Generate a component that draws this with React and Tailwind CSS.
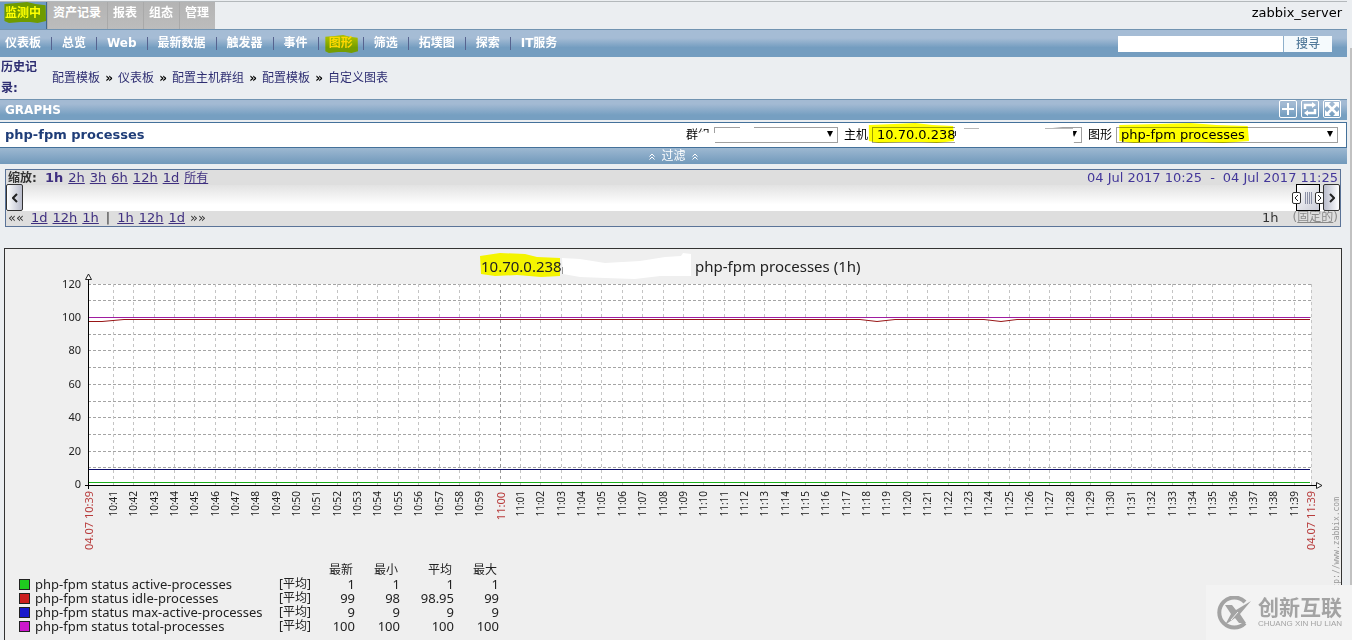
// src/pages/Graphs.jsx
import clsx from 'clsx';

const TABS = ['监测中', '资产记录', '报表', '组态', '管理'];
const MENU = ['仪表板', '总览', 'Web', '最新数据', '触发器', '事件', '图形', '筛选', '拓墣图', '探索', 'IT服务'];
const HISTORY = ['配置模板', '仪表板', '配置主机群组', '配置模板', '自定义图表'];

const ITEMS = [
  { name: 'php-fpm status active-processes', color: '#1fcc1f', values: ['1', '1', '1', '1'] },
  { name: 'php-fpm status idle-processes', color: '#cc1f1f', values: ['99', '98', '98.95', '99'] },
  { name: 'php-fpm status max-active-processes', color: '#1818cc', values: ['9', '9', '9', '9'] },
  { name: 'php-fpm status total-processes', color: '#cc18cc', values: ['100', '100', '100', '100'] },
];

// 10:41 .. 11:39, one label per minute
const TIMES = Array.from({ length: 59 }, (_, i) => {
  const m = 41 + i;
  return `${10 + Math.floor(m / 60)}:${String(m % 60).padStart(2, '0')}`;
});

const PLOT = { left: 83, right: 1306, top: 35, bottom: 236 };
const yAt = v => Math.round(235 - v * 1.67) + 0.5;
const xAt = i => Math.round(107.8 + i * 20.36) + 0.5;

// marker pen stroke laid over its parent
function Marker({ className }) {
  return (
    <svg
      className={clsx('absolute mix-blend-multiply pointer-events-none', className)}
      viewBox="0 0 100 20"
      preserveAspectRatio="none"
      aria-hidden="true"
    >
      <path d="M1 2 L30 1 L55 0 L75 2 L99 3 L100 18 L80 20 L62 19 L40 19 L12 20 L1 18 Z" fill="#ffff00" />
    </svg>
  );
}

function TopTabs() {
  return (
    <header className="flex justify-between h-[27px] text-xs">
      <nav className="flex h-full">
        {TABS.map((tab, i) => (
          <a
            key={tab}
            href="#"
            className={clsx(
              'relative flex pl-[5px] pr-1.5 pt-0.5 font-bold text-white leading-[18px]',
              i === 0
                ? 'bg-[#6f9bc4] border-r border-[#3f6690] pr-[5px]'
                : 'bg-linear-to-b from-[#b4b4b4] to-[#bcbcbc] border-l border-[#a9a9a9]'
            )}
          >
            {tab}
            {i === 0 && <Marker className="left-1 top-0 w-[42px] h-[21px]" />}
          </a>
        ))}
      </nav>
      <span className="pr-[5px] pt-0.5 leading-[18px] text-[13px] text-black">zabbix_server</span>
    </header>
  );
}

function MainMenu() {
  return (
    <div className="flex items-center justify-between h-7 pr-[15px] border-t border-[#7193b1] bg-linear-to-b from-[#a5bcd5] from-30% to-[#749dc0] to-65%">
      <nav className="flex -ml-[5px] text-xs font-bold leading-[13px] text-white">
        {MENU.map((item, i) => (
          <a
            key={item}
            href="#"
            className={clsx(
              'relative px-2.5',
              i > 0 && 'border-l border-[#56638f]',
              item === '图形' && 'text-[#ffd800]'
            )}
          >
            {item}
            {item === '图形' && <Marker className="left-1.5 -top-0.5 w-[33px] h-[18px]" />}
          </a>
        ))}
      </nav>
      <form className="flex h-4" onSubmit={e => e.preventDefault()}>
        <input type="text" aria-label="搜寻" className="w-[165px] bg-white outline-none px-1 text-xs" />
        <button type="submit" className="w-[49px] border-l border-[#8fb0cb] bg-[#f5fafd] text-xs leading-4 font-medium text-[#557c9c]">
          搜寻
        </button>
      </form>
    </div>
  );
}

function History() {
  return (
    <div className="flex items-center h-[42px] pl-px text-xs text-[#2e2e72]">
      <span className="w-[51px] pr-3 font-bold leading-[21px]">历史记录:</span>
      {HISTORY.map((item, i) => (
        <span key={i} className="flex">
          {i > 0 && <span className="w-[18px] text-center font-bold text-black">»</span>}
          <a href="#">{item}</a>
        </span>
      ))}
    </div>
  );
}

function HeaderIcon({ label, children }) {
  return (
    <button type="button" aria-label={label} className="size-[18px] border border-white rounded-xs">
      <svg viewBox="0 0 16 16" className="size-4" fill="none" stroke="#fff" strokeWidth="2">
        {children}
      </svg>
    </button>
  );
}

function GraphsHeader() {
  return (
    <div className="flex justify-between h-[21px] pl-[5px] pr-1.5 border-t border-[#7193b1] bg-linear-to-b from-[#a3bad3] from-20% to-[#769fc1] to-75%">
      <h1 className="text-xs leading-5 font-bold text-white">GRAPHS</h1>
      <div className="flex gap-1">
        <HeaderIcon label="添加">
          <path d="M8 2v12M2 8h12" />
        </HeaderIcon>
        <HeaderIcon label="重置">
          <path d="M3 8V4h8M13 8v4H5" strokeWidth="2.500" />
          <path d="M10 1l4 3-4 3zM6 9l-4 3 4 3z" fill="#fff" stroke="none" />
        </HeaderIcon>
        <HeaderIcon label="全屏">
          <path d="M3 3l10 10M13 3L3 13" strokeWidth="2.500" />
          <path d="M1 1h6L1 7zM15 1v6L9 1zM1 15V9l6 6zM15 15H9l6-6z" fill="#fff" stroke="none" />
        </HeaderIcon>
      </div>
    </div>
  );
}

function Picker({ id, label, value, width, children }) {
  return (
    <div className="flex items-center">
      <label htmlFor={id} className="w-7 text-xs">{label}</label>
      <div className={clsx('relative h-4', width)}>
        <select
          id={id}
          className="block size-full appearance-none border border-[#a0a0a0] bg-white pl-1 pr-4 text-[13px] leading-[14px] text-black outline-none"
        >
          <option>{value}</option>
        </select>
        <svg viewBox="0 0 8 7" className="absolute right-1 top-1 w-2 h-[7px] pointer-events-none" aria-hidden="true">
          <path d="M1 0h6L4 6z" fill="#000" />
        </svg>
        {children}
      </div>
    </div>
  );
}

function PageTitle() {
  return (
    <div className="flex items-center justify-between h-[26px] mt-0.5 pl-[5px] pr-2 border border-l-0 border-[#44719a] bg-white">
      <h2 className="text-[13px] font-bold text-[#1f3d78]">php-fpm processes</h2>
      <div className="flex gap-1.5">
        <Picker id="group" label="群组" value="" width="w-[124px]">
          <svg viewBox="0 0 60 20" className="absolute -left-4 -top-0.5 w-[60px] h-5 pointer-events-none" aria-hidden="true">
            <path d="M0 8L6 6 11 8V20H0zM11 8h6v10h-6zM42 0h14v4H42z" fill="#fff" />
          </svg>
        </Picker>
        <Picker id="host" label="主机" value="10.70.0.238" width="w-[210px]">
          <svg viewBox="0 0 210 24" className="absolute left-0 -top-1 w-[210px] h-6 pointer-events-none" aria-hidden="true">
            <path d="M83 0H92V4L106 4V0H170V3L201 6V8L202 21H83V14L84 13V6H83Z" fill="#fff" />
            <path d="M83.500 8v5" stroke="#333" />
            <path d="M92 5.500h15M173 5.500h28" stroke="#b9b9b9" />
          </svg>
          <Marker className="-left-1 -top-1 w-[86px] h-5" />
        </Picker>
        <Picker id="graph" label="图形" value="php-fpm processes" width="w-[222px]">
          <Marker className="left-0.5 -top-1 w-[131px] h-5" />
        </Picker>
      </div>
    </div>
  );
}

function Chevrons() {
  return (
    <svg viewBox="0 0 6 7" className="w-1.5 h-[7px]" fill="none" stroke="#fff" aria-hidden="true">
      <path d="M0.500 3.500L3 1l2.500 2.500M0.500 6.500L3 4l2.500 2.500" />
    </svg>
  );
}

function FilterBar() {
  return (
    <button
      type="button"
      className="flex items-center justify-center gap-1.5 w-full h-4 bg-linear-to-b from-[#9db8d1] to-[#7199bb] text-xs leading-4 text-white"
    >
      <Chevrons />
      过滤
      <Chevrons />
    </button>
  );
}

function Links({ items }) {
  return items.map(item => (
    <a key={item} href="#" className="underline text-[#3f2f80]">{item}</a>
  ));
}

function ScrollButton({ label, className, d }) {
  return (
    <button
      type="button"
      aria-label={label}
      className={clsx('absolute -top-px w-[17px] h-[27px] rounded-xs border border-[#333] from-white to-[#b9bccb] flex items-center justify-center', className)}
    >
      <svg viewBox="0 0 6 10" className="w-1.5 h-2.5" fill="none" stroke="#222" strokeWidth="2">
        <path d={d} />
      </svg>
    </button>
  );
}

function Grip({ className, d }) {
  return (
    <span className={clsx('absolute top-[7px] w-[9px] h-3 rounded-xs border border-[#333] bg-white flex items-center justify-center', className)}>
      <svg viewBox="0 0 5 8" className="w-[5px] h-2" fill="none" stroke="#222">
        <path d={d} />
      </svg>
    </span>
  );
}

function TimeScroll() {
  return (
    <section className="mt-[5px] ml-[5px] mr-1.5 border border-[#5a7398] bg-[#dedede] text-[13px] text-[#333]">
      <div className="flex justify-between h-[15px] px-0.5 leading-4">
        <div className="flex gap-[5px]">
          <b className="w-8 text-xs leading-4">缩放:</b>
          <b className="text-[#3f2f80]">1h</b>
          <Links items={['2h', '3h', '6h', '12h', '1d']} />
          <a href="#" className="text-xs leading-4 underline text-[#3f2f80]">所有</a>
        </div>
        <div className="flex gap-2 text-[#43379a]">
          <span>04 Jul 2017 10:25</span>
          <span>-</span>
          <span>04 Jul 2017 11:25</span>
        </div>
      </div>
      <div className="relative h-[26px] bg-linear-to-b from-[#e2e2e2] to-white to-75%">
        <ScrollButton label="向前" className="left-0 bg-linear-to-r" d="M5 1L1 5l4 4" />
        <div className="absolute right-5 -top-px w-6 h-[27px] border border-black bg-linear-to-br from-white to-[#c9cbd6] flex items-center justify-center gap-px">
          {[0, 1, 2, 3].map(i => <i key={i} className="w-px h-3 bg-[#8a8fa5]" />)}
          <Grip className="-left-[5px]" d="M4 1L1 4l3 3" />
          <Grip className="-right-[5px]" d="M1 1l3 3-3 3" />
        </div>
        <ScrollButton label="向后" className="right-0 bg-linear-to-l" d="M1 1l4 4-4 4" />
        <input type="range" aria-label="时间" defaultValue="100" className="absolute left-5 right-5 inset-y-0 opacity-0" />
      </div>
      <div className="flex justify-between h-[15px] px-0.5 leading-[13px]">
        <div className="flex gap-[5px]">
          <span className="w-[18px]">««</span>
          <Links items={['1d', '12h', '1h']} />
          <span className="px-0.5">|</span>
          <Links items={['1h', '12h', '1d']} />
          <span>»»</span>
        </div>
        <div className="flex gap-3.5">
          <span>1h</span>
          <a href="#" className="text-xs leading-[13px] text-[#8a8a8a]">(<span className="underline">固定的</span>)</a>
        </div>
      </div>
    </section>
  );
}

function Chart() {
  const { left, right, top, bottom } = PLOT;
  const idle = yAt(99);
  return (
    <svg viewBox="0 0 1336 314" className="block w-full overflow-visible" role="img" aria-label="php-fpm processes (1h)">
      <path d="M475 7L495 4 520 5 532 8 555 9V27L536 28 512 26 490 27 476 25Z" fill="#f4f400" />
      <path d="M557 9L575 10 600 14 635 12 660 8 676 7 678 4 686 5V27L655 27 630 30 600 29 575 28 558 25Z" fill="#fff" />
      <path d="M557.500 18v7" stroke="#999" />
      <g fontSize="15" fill="#222">
        <text x="476" y="23">10.70.0.238</text>
        <text x="690" y="23">php-fpm processes (1h)</text>
      </g>

      <rect x={left} y={top} width={right - left} height={bottom - top} fill="#fff" />
      <g stroke="#a4a4a4" strokeDasharray="3 2" shapeRendering="crispEdges">
        {Array.from({ length: 12 }, (_, i) => (
          <line key={i} x1={left} x2={right} y1={yAt((i + 1) * 10)} y2={yAt((i + 1) * 10)} />
        ))}
      </g>
      <g stroke="#c4c4c4" strokeDasharray="3 3" shapeRendering="crispEdges">
        {TIMES.map((t, i) => (
          <line key={t} x1={xAt(i)} x2={xAt(i)} y1={top} y2={bottom} stroke={t === '11:00' ? '#999' : undefined} />
        ))}
        <line x1={right} x2={right} y1={top} y2={bottom} />
      </g>

      <g fill="none">
        <path d={`M${left} ${yAt(100)}H${right - 1}`} stroke="#a01ca0" />
        <path
          d={`M${left} ${idle + 2}h14L119 ${idle}H855L872 ${idle + 2}L890 ${idle}H979L996 ${idle + 2}L1012 ${idle}H${right - 1}`}
          stroke="#981616"
        />
        <path d={`M${left} ${yAt(9)}H${right - 1}`} stroke="#10106c" />
        <path d={`M${left} ${yAt(1)}H${right - 1}`} stroke="#1cb01c" />
        <path d="M83.500 30V240M80 236.500H1311" stroke="#000" />
        <path d="M80.500 30.500L83.500 25l3 5.500zM1311.500 233.500L1317 236.500l-5.500 3z" fill="#fff" stroke="#222" />
      </g>

      <g fontSize="11" fill="#222" textAnchor="end">
        {[0, 20, 40, 60, 80, 100, 120].map(v => (
          <text key={v} x="76" y={yAt(v) + 3.5}>{v}</text>
        ))}
      </g>
      <g fontSize="10" fill="#222" textAnchor="end">
        {TIMES.map((t, i) => (
          t === '11:00'
            ? <text key={t} fontSize="11" fill="#b83c3c" transform={`translate(${xAt(i) + 4} 243) rotate(-90)`}>{t}</text>
            : <text key={t} transform={`translate(${xAt(i) + 3.5} 242) rotate(-90)`}>{t}</text>
        ))}
        <text fontSize="11" fill="#b83c3c" transform="translate(88 242) rotate(-90)">04.07 10:39</text>
        <text fontSize="11" fill="#b83c3c" transform="translate(1310 242) rotate(-90)">04.07 11:39</text>
        <text
          fontSize="8"
          fill="#999"
          className="[font-family:'DejaVu_Sans_Mono',monospace]"
          transform="translate(1334 248) rotate(-90)"
        >
          http://www.zabbix.com
        </text>
      </g>
    </svg>
  );
}

function Legend() {
  return (
    <table className="ml-3.5 table-fixed w-[480px] text-[13px] leading-[14px] text-[#222] text-right">
      <colgroup>
        <col className="w-[260px]" />
        <col className="w-8" />
        <col className="w-11" />
        <col className="w-[45px]" />
        <col className="w-[54px]" />
        <col className="w-[45px]" />
      </colgroup>
      <thead>
        <tr className="h-3.5 text-xs leading-[14px]">
          <td />
          <td />
          {['最新', '最小', '平均', '最大'].map(h => (
            <th key={h} className="p-0 pr-0.5 font-normal">{h}</th>
          ))}
        </tr>
      </thead>
      <tbody>
        {ITEMS.map(({ name, color, values }) => (
          <tr key={name} className="h-3.5">
            <td className="p-0 text-left">
              <div className="flex items-center gap-[5px] h-3.5 whitespace-nowrap">
                <i className="size-[11px] border border-[#222]" style={{ backgroundColor: color }} />
                {name}
              </div>
            </td>
            <td className="p-0 text-left text-xs leading-[14px] whitespace-nowrap">[平均]</td>
            {values.map((v, i) => <td key={i} className="p-0">{v}</td>)}
          </tr>
        ))}
      </tbody>
    </table>
  );
}

function Watermark() {
  return (
    <div className="absolute right-0 bottom-0 flex items-center gap-1.5 w-[146px] h-[55px] pl-2.5 bg-[#f3f3f3] text-[#a3a3a3]">
      <svg viewBox="0 0 36 34" className="w-9 h-[34px] shrink-0" aria-hidden="true">
        <path d="M29 6A15 15 0 1 0 29 27" fill="none" stroke="#a3a3a3" strokeWidth="4" />
        <path d="M9 9h7l4 5 15-9-11 13 6 9h-7l-4-5-10 7 6-11z" fill="#a3a3a3" />
        <path d="M15 24l7-8" stroke="#f3f3f3" />
      </svg>
      <div className="whitespace-nowrap">
        <div className="text-[21px] leading-[22px] font-bold">创新互联</div>
        <div className="text-[8px] leading-[9px] [font-family:'Liberation_Sans',sans-serif]">CHUANG XIN HU LIAN</div>
      </div>
    </div>
  );
}

export default function App() {
  return (
    <div className="relative flex min-h-screen overflow-hidden bg-[#ebeef1] [font-family:'DejaVu_Sans','Noto_Sans_CJK_SC',sans-serif]">
      <main className="flex flex-col flex-1 min-w-0 pt-px">
        <div className="h-px bg-[#b3b8bb]" />
        <TopTabs />
        <MainMenu />
        <History />
        <GraphsHeader />
        <PageTitle />
        <FilterBar />
        <TimeScroll />
        <section className="flex-1 mt-[21px] ml-1 mr-[5px] border border-b-0 border-[#333] bg-[#efefef] [font-family:'Noto_Sans','Noto_Sans_CJK_SC',sans-serif]">
          <Chart />
          <Legend />
        </section>
      </main>
      <div className="w-[5px] pl-[3px] pt-12 flex">
        <div className="flex-1 bg-[#c1c1c1]" />
      </div>
      <Watermark />
    </div>
  );
}
